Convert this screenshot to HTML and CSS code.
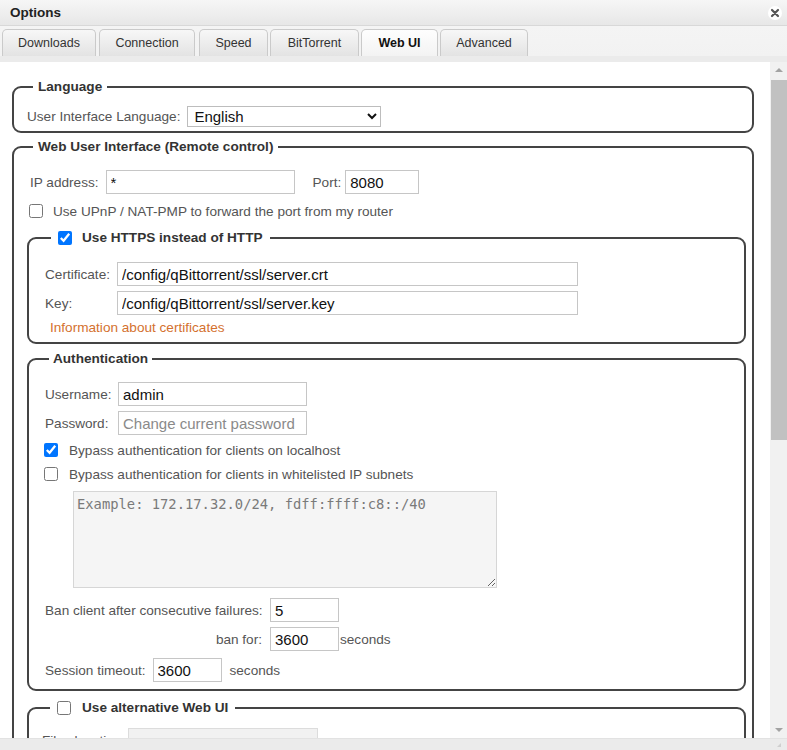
FILE: index.html
```html
<!DOCTYPE html>
<html lang="en">
<head>
  <meta charset="UTF-8">
  <title>Options</title>
  <link rel="stylesheet" href="styles.css">
</head>
<body>
  <div class="window">
    <div class="titlebar">
      <span class="title">Options</span>
      <svg class="close" width="14" height="14" viewBox="0 0 14 14">
        <circle cx="7" cy="7" r="7" fill="#fff"/>
        <path d="M4 4 L10 10 M10 4 L4 10" stroke="#555" stroke-width="2.2" stroke-linecap="round"/>
      </svg>
    </div>

    <div class="tabbar">
      <ul class="tabs">
        <li class="t-downloads">Downloads</li>
        <li class="t-connection">Connection</li>
        <li class="t-speed">Speed</li>
        <li class="t-bittorrent">BitTorrent</li>
        <li class="t-webui active">Web UI</li>
        <li class="t-advanced">Advanced</li>
      </ul>
    </div>

    <div class="main">
      <div class="content">
        <fieldset class="group">
          <legend>Language</legend>
          <div class="row">
            <label for="locale">User Interface Language:</label>
            <select id="locale" class="lang"><option>English</option></select>
          </div>
        </fieldset>

        <fieldset class="group webui">
          <legend>Web User Interface (Remote control)</legend>
          <div class="row ip-row">
            <label for="ip">IP address:</label>
            <input type="text" id="ip" class="w189" value="*">
            <label for="port" class="port">Port:</label>
            <input type="text" id="port" class="w74" value="8080">
          </div>
          <div class="check-row upnp">
            <input type="checkbox" id="upnp">
            <label for="upnp">Use UPnP / NAT-PMP to forward the port from my router</label>
          </div>

          <fieldset class="sub https">
            <legend class="check-legend">
              <input type="checkbox" id="use_https" checked>
              <label for="use_https">Use HTTPS instead of HTTP</label>
            </legend>
            <div class="form cert">
              <label for="cert">Certificate:</label>
              <input type="text" id="cert" class="w461" value="/config/qBittorrent/ssl/server.crt">
              <label for="key">Key:</label>
              <input type="text" id="key" class="w461" value="/config/qBittorrent/ssl/server.key">
            </div>
            <a class="link" href="#">Information about certificates</a>
          </fieldset>

          <fieldset class="sub auth">
            <legend>Authentication</legend>
            <div class="form login">
              <label for="username">Username:</label>
              <input type="text" id="username" class="w189" value="admin">
              <label for="password">Password:</label>
              <input type="password" id="password" class="w189" placeholder="Change current password">
            </div>
            <div class="checks">
              <div class="check-row">
                <input type="checkbox" id="bypass_local" checked>
                <label for="bypass_local">Bypass authentication for clients on localhost</label>
              </div>
              <div class="check-row">
                <input type="checkbox" id="bypass_subnet">
                <label for="bypass_subnet">Bypass authentication for clients in whitelisted IP subnets</label>
              </div>
            </div>
            <textarea class="subnets" placeholder="Example: 172.17.32.0/24, fdff:ffff:c8::/40"></textarea>
            <div class="ban">
              <label for="max_fail">Ban client after consecutive failures:</label>
              <input type="text" id="max_fail" class="w69" value="5">
              <span></span>
              <label for="ban_time" class="right">ban for:</label>
              <input type="text" id="ban_time" class="w69" value="3600">
              <span class="unit-tight">seconds</span>
            </div>
            <div class="row session">
              <label for="session">Session timeout:</label>
              <input type="text" id="session" class="w69" value="3600">
              <span class="unit">seconds</span>
            </div>
          </fieldset>

          <fieldset class="sub alt">
            <legend class="check-legend">
              <input type="checkbox" id="alt_ui">
              <label for="alt_ui">Use alternative Web UI</label>
            </legend>
            <div class="row files-row">
              <label for="alt_path">Files location:</label>
              <input type="text" id="alt_path" class="w190" disabled>
            </div>
          </fieldset>
        </fieldset>
      </div>

      <div class="scrollbar">
        <span class="arrow up"></span>
        <div class="track"><div class="thumb"></div></div>
        <span class="arrow down"></span>
      </div>
    </div>

    <div class="bottombar"><span class="grip"></span></div>
  </div>
</body>
</html>
```

FILE: styles.css
```css
* { box-sizing: border-box; }
body { margin: 0; font-family: "Liberation Sans", Arial, sans-serif; font-size: 13.6px; color: #555; background: #fff; }

.window { width: 787px; height: 750px; display: flex; flex-direction: column; overflow: hidden; }

/* title + tabs */
.titlebar { height: 26px; flex: none; display: flex; align-items: center; justify-content: space-between; padding: 0 5px 0 10px; background: linear-gradient(#f6f6f6, #e7e7e7); border-bottom: 1px solid #d8d8d8; }
.title { font-weight: bold; font-size: 13.5px; color: #222; }
.close { display: block; }

.tabbar { height: 36px; flex: none; background: linear-gradient(#f4f4f4 0, #f2f2f2 30px, #ebebeb 30px); }
.tabs { list-style: none; margin: 0; padding: 3px 0 0 2px; display: flex; gap: 2px; }
.tabs li { height: 27px; line-height: 26px; text-align: center; font-size: 12.5px; color: #333; border: 1px solid #cacaca; border-bottom: none; border-radius: 5px 5px 0 0; background: linear-gradient(#f7f7f7, #e3e3e3); }
.tabs li.active { font-weight: bold; color: #111; background: linear-gradient(#fefefe, #f3f3f3); }
.t-downloads { width: 94px; }
.t-connection { width: 96px; margin-left: 1px; }
.t-speed { width: 69px; margin-left: 2px; }
.t-bittorrent { width: 89px; }
.t-webui { width: 77px; }
.t-advanced { width: 88px; }

/* scrolling area */
.main { flex: 1; display: flex; min-height: 0; }
.content { flex: 1; overflow: hidden; padding: 17px 16px 0 12px; }

.scrollbar { width: 17px; flex: none; display: flex; flex-direction: column; background: #f1f1f1; }
.arrow { height: 17px; flex: none; display: flex; align-items: center; justify-content: center; }
.arrow::before { content: ""; border-left: 4px solid transparent; border-right: 4px solid transparent; }
.arrow.up::before { border-bottom: 4px solid #a3a3a3; margin-top: -1px; }
.arrow.down::before { border-top: 4px solid #a3a3a3; }
.track { flex: 1; padding-top: 1px; }
.thumb { height: 360px; margin-left: 1px; background: #c1c1c1; }

.bottombar { height: 12px; flex: none; background: #ebebeb; border-top: 1px solid #e2e2e2; display: flex; justify-content: flex-end; align-items: center; padding-right: 6px; }
.grip { width: 0; height: 0; border-left: 4px solid transparent; border-bottom: 4px solid #cfcfcf; }

/* fieldsets */
fieldset { min-width: 0; margin: 0; border: 2px solid #444; border-radius: 9px; }
legend { padding: 0 5px; margin-left: 6px; line-height: 16px; font-weight: bold; color: #333; }

.group { margin-bottom: 6px; padding: 11px 6px 4px 13px; }
.webui { padding: 15px 6px 0 15px; }
.webui > legend { margin-left: 4px; }

.sub { margin: 0 0 7px -2px; padding: 14px 15px 6px 15px; }
.sub legend { margin-left: 5px; padding: 0 4px; }
.sub .check-legend { margin-left: 7px; padding: 0 7px; }
.check-legend { display: flex; align-items: center; gap: 10px; height: 20px; }
.check-legend label { font-weight: bold; color: #333; }

.https { margin-top: 8px; }
.auth { padding-top: 15px; padding-bottom: 7px; }
.alt { padding: 10px 15px 40px 15px; }
.alt .check-legend { margin-left: 6px; gap: 11px; }

/* rows */
.row { display: flex; align-items: center; gap: 7px; }
.ip-row { padding-left: 1px; }
.port { margin-left: 11px; margin-right: -3px; }
.files-row { margin-left: -2px; gap: 3px; }

.check-row { display: flex; align-items: center; gap: 10px; height: 20px; }
.upnp { height: 18px; margin-top: 8px; }
.checks { margin-top: 5px; display: flex; flex-direction: column; gap: 4px; }
.checks .check-row { gap: 11px; }

input[type=checkbox] { width: 14px; height: 14px; margin: 0; flex: none; }

input[type=text], input[type=password] { height: 24px; padding: 0 4px; border: 1px solid #c6c6c6; border-radius: 0; font-family: "Liberation Sans", Arial, sans-serif; font-size: 15px; color: #111; background: #fff; }
input::placeholder { color: #8a8a8a; }
input:disabled { background: #f1f1f1; border-color: #dcdcdc; }

.w69 { width: 69px; }
.w74 { width: 74px; }
.w189 { width: 189px; }
.w190 { width: 190px; }
.w461 { width: 461px; }

.lang { width: 194px; height: 21px; padding: 0 2px; border: 1px solid #bdbdbd; border-radius: 0; font-family: "Liberation Sans", Arial, sans-serif; font-size: 15px; color: #111; background: #fff; }

.form { display: grid; align-items: center; row-gap: 5px; padding-left: 1px; }
.cert { grid-template-columns: 72px auto; }
.login { grid-template-columns: 73px auto; }

.link { display: block; margin: 5px 0 0 6px; line-height: 16px; color: #d4712f; text-decoration: none; }

.subnets { display: block; width: 424px; height: 97px; margin: 7px 0 0 29px; padding: 4px 3px; border: 1px solid #d6d6d6; background: #f5f5f5; font-family: "DejaVu Sans Mono", monospace; font-size: 13.8px; line-height: 16px; color: #333; }
.subnets::placeholder { color: #7a7a7a; }

.ban { margin-top: 10px; padding-left: 1px; display: grid; grid-template-columns: 225px 69px auto; row-gap: 5px; align-items: center; }
.ban .right { justify-self: end; padding-right: 8px; }
.unit-tight { padding-left: 1px; }

.session { margin-top: 7px; padding-left: 1px; }
.session .unit { margin-left: 1px; }
```
